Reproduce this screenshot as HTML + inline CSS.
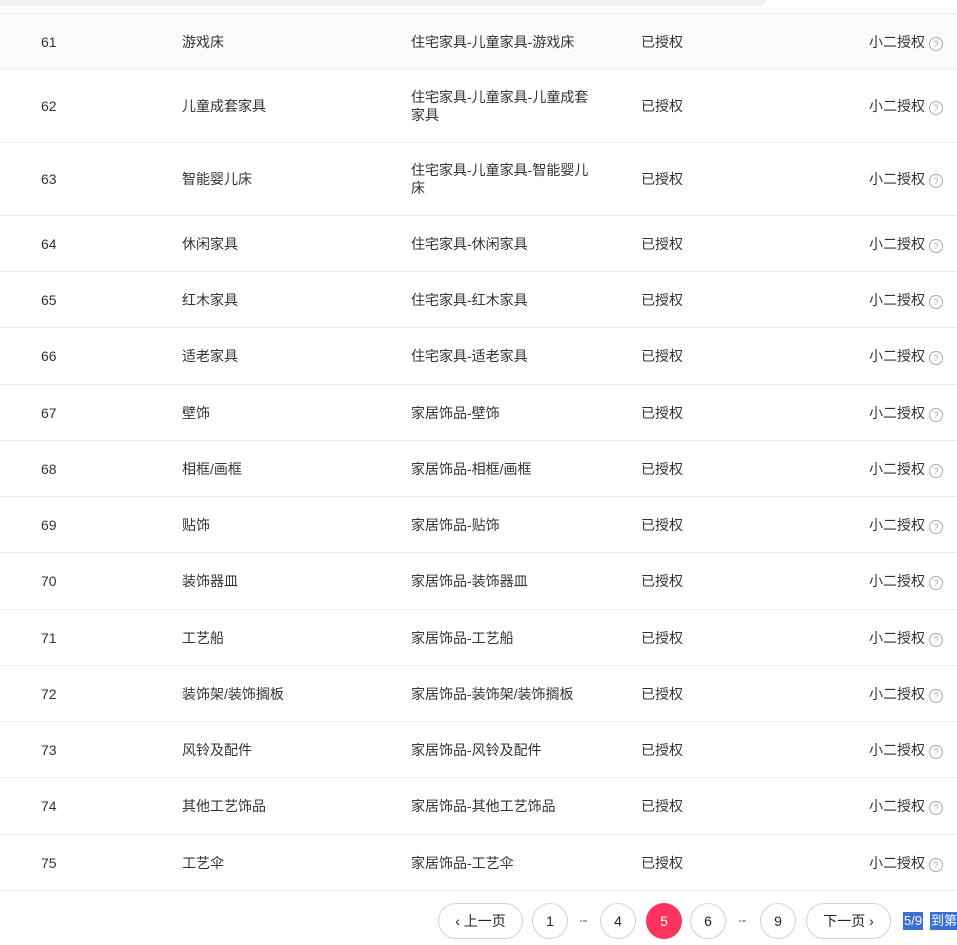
<!DOCTYPE html>
<html><head><meta charset="utf-8"><style>
body{margin:0;width:957px;height:945px;background:#fff;position:relative;overflow:hidden;font-family:"Liberation Sans","Noto Sans CJK SC",sans-serif;font-size:14px;color:#333}
.top{position:absolute;left:0;top:0;width:766px;height:6px;background:#f0f1f3;border-radius:0 0 8px 0}
.hl{position:absolute;left:0;width:957px;height:1px;background:#eceef1}
.row{position:absolute;left:0;width:957px;border-bottom:1px solid #eceef1;box-sizing:border-box}
.row div{position:absolute;top:50%;transform:translateY(-50%);line-height:18px}
.c1{left:41px}.c2{left:182px}.c3{left:411px;width:190px}.c4{left:641px}.c5{left:869px}
.q{display:inline-block;width:12px;height:12px;border:1px solid #aaa;border-radius:50%;font-size:9px;line-height:12px;text-align:center;color:#aaa;margin-left:4px;vertical-align:0px}
.pg{position:absolute;top:903px;height:36px;border:1px solid #d0d3d9;box-sizing:border-box;border-radius:18px;text-align:center;line-height:34px;font-size:14px;color:#222}
.dots{position:absolute;top:920px;width:3px;height:2px;border-left:2px solid #aaa;border-right:2px solid #aaa}
.dots:after{content:"";position:absolute;left:1px;top:0;width:2px;height:2px;background:#aaa}
</style></head><body>
<div class="top"></div>
<div class="hl" style="top:13px"></div>
<div class="row" style="top:14px;height:56px;background:#f9fbfd"><div class="c1">61</div><div class="c2">游戏床</div><div class="c3">住宅家具-儿童家具-游戏床</div><div class="c4">已授权</div><div class="c5">小二授权<span class="q">?</span></div></div>
<div class="row" style="top:70px;height:73px"><div class="c1">62</div><div class="c2">儿童成套家具</div><div class="c3">住宅家具-儿童家具-儿童成套家具</div><div class="c4">已授权</div><div class="c5">小二授权<span class="q">?</span></div></div>
<div class="row" style="top:143px;height:73px"><div class="c1">63</div><div class="c2">智能婴儿床</div><div class="c3">住宅家具-儿童家具-智能婴儿床</div><div class="c4">已授权</div><div class="c5">小二授权<span class="q">?</span></div></div>
<div class="row" style="top:216px;height:56px"><div class="c1">64</div><div class="c2">休闲家具</div><div class="c3">住宅家具-休闲家具</div><div class="c4">已授权</div><div class="c5">小二授权<span class="q">?</span></div></div>
<div class="row" style="top:272px;height:56px"><div class="c1">65</div><div class="c2">红木家具</div><div class="c3">住宅家具-红木家具</div><div class="c4">已授权</div><div class="c5">小二授权<span class="q">?</span></div></div>
<div class="row" style="top:328px;height:57px"><div class="c1">66</div><div class="c2">适老家具</div><div class="c3">住宅家具-适老家具</div><div class="c4">已授权</div><div class="c5">小二授权<span class="q">?</span></div></div>
<div class="row" style="top:385px;height:56px"><div class="c1">67</div><div class="c2">壁饰</div><div class="c3">家居饰品-壁饰</div><div class="c4">已授权</div><div class="c5">小二授权<span class="q">?</span></div></div>
<div class="row" style="top:441px;height:56px"><div class="c1">68</div><div class="c2">相框/画框</div><div class="c3">家居饰品-相框/画框</div><div class="c4">已授权</div><div class="c5">小二授权<span class="q">?</span></div></div>
<div class="row" style="top:497px;height:56px"><div class="c1">69</div><div class="c2">贴饰</div><div class="c3">家居饰品-贴饰</div><div class="c4">已授权</div><div class="c5">小二授权<span class="q">?</span></div></div>
<div class="row" style="top:553px;height:57px"><div class="c1">70</div><div class="c2">装饰器皿</div><div class="c3">家居饰品-装饰器皿</div><div class="c4">已授权</div><div class="c5">小二授权<span class="q">?</span></div></div>
<div class="row" style="top:610px;height:56px"><div class="c1">71</div><div class="c2">工艺船</div><div class="c3">家居饰品-工艺船</div><div class="c4">已授权</div><div class="c5">小二授权<span class="q">?</span></div></div>
<div class="row" style="top:666px;height:56px"><div class="c1">72</div><div class="c2">装饰架/装饰搁板</div><div class="c3">家居饰品-装饰架/装饰搁板</div><div class="c4">已授权</div><div class="c5">小二授权<span class="q">?</span></div></div>
<div class="row" style="top:722px;height:56px"><div class="c1">73</div><div class="c2">风铃及配件</div><div class="c3">家居饰品-风铃及配件</div><div class="c4">已授权</div><div class="c5">小二授权<span class="q">?</span></div></div>
<div class="row" style="top:778px;height:57px"><div class="c1">74</div><div class="c2">其他工艺饰品</div><div class="c3">家居饰品-其他工艺饰品</div><div class="c4">已授权</div><div class="c5">小二授权<span class="q">?</span></div></div>
<div class="row" style="top:835px;height:56px"><div class="c1">75</div><div class="c2">工艺伞</div><div class="c3">家居饰品-工艺伞</div><div class="c4">已授权</div><div class="c5">小二授权<span class="q">?</span></div></div>

<div class="pg" style="left:438px;width:85px">‹ 上一页</div>
<div class="pg" style="left:532px;width:36px">1</div>
<div class="dots" style="left:580px"></div>
<div class="pg" style="left:600px;width:36px">4</div>
<div class="pg" style="left:646px;width:36px;background:#fe3360;border-color:#fe3360;color:#fff">5</div>
<div class="pg" style="left:690px;width:36px">6</div>
<div class="dots" style="left:739px"></div>
<div class="pg" style="left:760px;width:36px">9</div>
<div class="pg" style="left:806px;width:85px">下一页 ›</div>
<div style="position:absolute;left:903px;top:912px;height:18px;line-height:18px;font-size:13px;background:#3a6fd8;color:#fff;padding:0 1px">5/9</div>
<div style="position:absolute;left:930px;top:912px;height:18px;line-height:18px;font-size:13px;background:#3a6fd8;color:#fff;padding:0 1px;white-space:nowrap">到第</div>
</body></html>
